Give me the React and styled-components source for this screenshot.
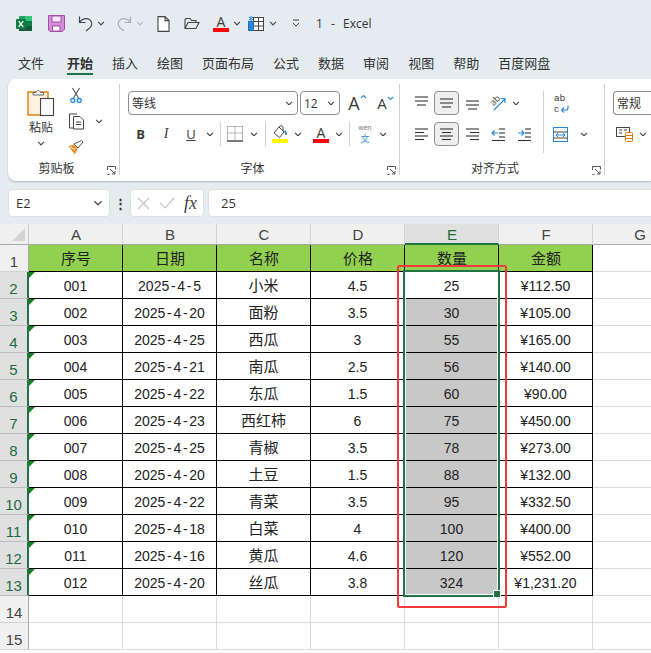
import React from 'react'
import styled, { createGlobalStyle } from 'styled-components'

const UI_FONT = '"Open Sans", "Noto Sans CJK SC", sans-serif'
const CELL_FONT = '"Liberation Sans", "Noto Sans CJK SC", sans-serif'
const GREEN = '#217346'

const GlobalStyle = createGlobalStyle`
    html, body {
        margin: 0;
        width: 651px;
        height: 653px;
        overflow: hidden;
        background: #e5ecf0;
    }
    * { box-sizing: border-box; }
`

const Page = styled.div`
    width: 651px;
    height: 653px;
    overflow: hidden;
    background: #e5ecf0;
    font-family: ${UI_FONT};
    color: #333;
`

const TitleBar = styled.div`
    height: 47px;
    display: flex;
    align-items: center;
    padding-left: 16px;
`

const Slot = styled.div`
    flex: none;
    width: ${p => p.$w}px;
    height: ${p => p.$h || 24}px;
    margin-left: ${p => p.$ml || 0}px;
    display: flex;
    align-items: center;
    justify-content: center;
    position: relative;
    ${p => p.$active && `
        background: #efefef;
        border: 1px solid #8f8f8f;
        border-radius: 4px;
    `}
`

const TitleText = styled.div`
    font-size: 12px;
    margin-left: 15px;
    word-spacing: 5px;
    color: #333;
`

const Tabs = styled.div`
    height: 32px;
    display: flex;
    gap: 19px;
    padding: 0 0 0 18px;
`

const Tab = styled.div`
    position: relative;
    height: 28px;
    line-height: 32px;
    font-size: 13px;
    font-weight: ${p => (p.$active ? 700 : 400)};
    ${p => p.$active && `
        margin-left: 4px;

        &::after {
            content: '';
            position: absolute;
            left: 0;
            right: 0;
            bottom: 0;
            height: 2px;
            background: ${GREEN};
        }
    `}
`

const Ribbon = styled.div`
    height: 102px;
    margin-left: 8px;
    display: flex;
    background: #fff;
    border-radius: 8px 0 0 8px;
    box-shadow: 0 1px 2px rgba(0, 0, 0, 0.22);
`

const Group = styled.div`
    position: relative;
    flex: none;
    width: ${p => p.$w}px;
    height: 91px;
    margin-top: 5px;
    padding: 7px 0 0 8px;
    border-right: 1px solid ${p => (p.$open ? 'transparent' : '#d0d0d0')};
`

const GroupBody = styled.div`
    height: 68px;
    display: flex;
`

const GroupLabel = styled.div`
    text-align: center;
    font-size: 12px;
    line-height: 16px;
    margin: 2px 14px 0 -8px;
`

const Launcher = styled.svg`
    position: absolute;
    right: 3px;
    bottom: 0;
    width: 9px;
    height: 9px;
`

const Stack = styled.div`
    display: flex;
    flex-direction: column;
    gap: 7px;
`

const Row = styled.div`
    display: flex;
    align-items: center;
    height: 24px;
`

const PasteCol = styled.div`
    width: 50px;
    margin-top: -4px;
    display: flex;
    flex-direction: column;
    align-items: center;
    font-size: 12px;
    line-height: 16px;
`

const PasteLabel = styled.span`
    margin: 3px 0 5px;
`

const SmallCol = styled.div`
    display: flex;
    flex-direction: column;
    gap: 2px;
    margin-top: -8px;
`

const Select = styled.div`
    flex: none;
    width: ${p => p.$w}px;
    height: 24px;
    margin-left: ${p => p.$ml || 0}px;
    padding: 0 4px 0 3px;
    display: flex;
    align-items: center;
    justify-content: space-between;
    border: 1px solid #8e8e8e;
    border-radius: 4px;
    font-size: 12px;
    ${p => p.$open && 'border-right: 0; border-radius: 4px 0 0 4px;'}
`

const Sep = styled.div`
    flex: none;
    width: 1px;
    height: ${p => p.$h || 24}px;
    margin: 0 ${p => p.$m ?? 3}px;
    background: #d0d0d0;
`

const FontBtn = styled.span`
    position: relative;
    font-family: ${p => (p.$serif ? '"Liberation Serif", serif' : '"Open Sans", sans-serif')};
    font-size: ${p => p.$size || 13}px;
    font-weight: ${p => p.$weight || 400};
    font-style: ${p => (p.$italic ? 'italic' : 'normal')};
    text-decoration: ${p => (p.$underline ? 'underline' : 'none')};
    line-height: 1;
    color: #3b3b3b;
`

const Caret = styled.svg`
    position: absolute;
    top: 0;
    left: 100%;
    width: 7px;
    height: 5px;
`

const ColorLetter = styled.div`
    width: 16px;
    display: flex;
    flex-direction: column;
    align-items: center;
    font-size: 14px;
    line-height: 13px;
    color: #3b3b3b;

    &::after {
        content: '';
        width: 16px;
        height: 4px;
        background: ${p => p.$bar};
    }
`

const PhoneticBox = styled.div`
    display: flex;
    flex-direction: column;
    align-items: center;
    font-family: "Liberation Sans", sans-serif;
    font-size: 7px;
    line-height: 8px;
    color: #777;

    b {
        font-family: "Noto Sans CJK SC", sans-serif;
        font-weight: 400;
        font-size: 9px;
        line-height: 13px;
        color: #2f8fd8;
    }
`

const WrapText = styled.div`
    width: 16px;
    font-family: "Liberation Sans", sans-serif;
    font-size: 9.5px;
    line-height: 11px;
    color: #3b3b3b;
    letter-spacing: 0.5px;
`

const WrapLine = styled.div`
    display: flex;
    align-items: center;
    gap: 1px;
`

const FormulaBar = styled.div`
    height: 28px;
    margin: 8px 0 7px 8px;
    display: flex;
    align-items: center;
`

const Box = styled.div`
    flex: none;
    width: ${p => p.$w}px;
    height: 28px;
    padding: 0 ${p => p.$pr || 0}px 0 ${p => p.$pl || 0}px;
    margin-left: ${p => p.$ml || 0}px;
    display: flex;
    align-items: center;
    justify-content: ${p => p.$justify || 'flex-start'};
    gap: ${p => p.$gap || 0}px;
    background: #fff;
    border: 1px solid #e0e0e0;
    border-radius: 4px;
    font-size: 13px;
    color: #333;
`

const Dots = styled.div`
    flex: none;
    width: 20px;
    text-align: center;
    font-size: 13px;
    font-weight: 700;
    line-height: 1;
`

const Fx = styled.span`
    font-family: "Liberation Serif", serif;
    font-style: italic;
    font-size: 18px;
    line-height: 1;
    color: #444;
`

const Sheet = styled.div`
    position: relative;
    height: 429px;
    background: #fff;
    overflow: hidden;
`

const Grid = styled.div`
    display: grid;
    grid-template-columns: 29px repeat(7, 94px);
    grid-template-rows: 21px repeat(15, 27px);
    font-family: ${CELL_FONT};
`

const Corner = styled.div`
    position: relative;
    background: #f0f0f0;
    border-right: 1px solid #c9c9c9;
    border-bottom: 1px solid #a9a9a9;

    &::after {
        content: '';
        position: absolute;
        right: 3px;
        bottom: 3px;
        border-style: solid;
        border-width: 0 0 13px 13px;
        border-color: transparent transparent #d4d4d4 transparent;
    }
`

const ColHead = styled.div`
    display: flex;
    align-items: center;
    justify-content: center;
    padding: 1px 0 0 1px;
    font-size: 15px;
    background: ${p => (p.$selected ? '#e0e0e0' : '#f0f0f0')};
    color: ${p => (p.$selected ? '#1d6b41' : '#444')};
    border-right: 1px solid #d2d2d2;
    border-bottom: ${p => (p.$selected ? `2px solid ${GREEN}` : '1px solid #a9a9a9')};
`

const RowHead = styled.div`
    display: flex;
    align-items: flex-end;
    justify-content: center;
    font-size: 15px;
    line-height: 19px;
    background: ${p => (p.$selected ? '#e0e0e0' : '#f0f0f0')};
    color: ${p => (p.$selected ? '#1d6b41' : '#444')};
    border-bottom: 1px solid ${p => (p.$selected ? '#bdbdbd' : '#d2d2d2')};
    border-right: ${p => (p.$selected ? `2px solid ${GREEN}` : '1px solid #a9a9a9')};
`

const Cell = styled.div`
    position: relative;
    display: flex;
    align-items: center;
    justify-content: center;
    font-size: 14px;
    padding-top: 1px;
    color: #222;
    background: ${p => p.$bg || '#fff'};
    border-right: 1px solid ${p => (p.$table ? '#000' : '#dcdcdc')};
    border-bottom: 1px solid ${p => (p.$table ? '#000' : '#dcdcdc')};
    ${p => p.$head && 'font-size: 15px; padding: 0 0 1px 1px;'}
    ${p => p.$cjk && 'font-size: 15px; padding: 0 0 1px;'}
    ${p => p.$flag && `
        &::before {
            content: '';
            position: absolute;
            left: 0;
            top: 0;
            border-style: solid;
            border-width: 6px 6px 0 0;
            border-color: #15801f transparent transparent transparent;
        }
    `}
`

const Dash = styled.span`
    margin: 0 1.7px;
`

const Selection = styled.div`
    position: absolute;
    left: 403px;
    top: 46px;
    width: 97px;
    height: 327px;
    border: 2px solid ${GREEN};
    box-shadow: inset 0 0 0 1px #fff;
    pointer-events: none;
`

const Handle = styled.div`
    position: absolute;
    right: -3px;
    bottom: -3px;
    width: 6px;
    height: 6px;
    background: ${GREEN};
    border: 1px solid #fff;
    box-sizing: content-box;
`

const Highlight = styled.div`
    position: absolute;
    left: 397px;
    top: 41px;
    width: 110px;
    height: 343px;
    border: 2px solid #f43b3b;
    border-radius: 2px;
    pointer-events: none;
`

const Chevron = ({ color = '#444', size = 8 }) => (
    <svg width={size} height={size * 0.6} viewBox="0 0 8 5" fill="none" stroke={color} strokeWidth="1.2">
        <path d="M1 1l3 3 3-3" />
    </svg>
)

const ExcelLogo = () => (
    <svg width="16" height="17" viewBox="0 0 16 17">
        <rect x="3" y="1" width="13" height="15" rx="1" fill="#21a366" />
        <rect x="9" y="1" width="7" height="5" fill="#33c481" />
        <rect x="3" y="11" width="13" height="5" fill="#185c37" />
        <rect x="9" y="6" width="7" height="5" fill="#107c41" />
        <rect x="0" y="4" width="10" height="10" rx="1" fill="#107c41" />
        <path d="M2.6 6.2l4.6 5.6M7.2 6.2l-4.6 5.6" stroke="#fff" strokeWidth="1.3" />
    </svg>
)

const SaveIcon = () => (
    <svg width="17" height="17" viewBox="0 0 17 17">
        <path d="M.5.5h16v14l-2 2H2l-1.5-1.5z" fill="#d28fd8" stroke="#a34cab" />
        <rect x="4" y="1" width="9" height="6" fill="#f6e9f7" stroke="#a34cab" />
        <rect x="4.5" y="11" width="7.5" height="5" fill="#fff" stroke="#a34cab" />
    </svg>
)

const UndoIcon = ({ color = '#444' }) => (
    <svg width="16" height="17" viewBox="0 0 16 17" fill="none" stroke={color} strokeWidth="1.2">
        <path d="M1.5 1.5v6h6M1.8 7.2C4 3.6 8.5 2.8 11.5 4.6c3 2 2.8 5.6.5 8L8 16" />
    </svg>
)

const RedoIcon = () => (
    <svg width="16" height="17" viewBox="0 0 16 17" fill="none" stroke="#a9adb0" strokeWidth="1.2">
        <path d="M14.5 1.5v6h-6M14.2 7.2C12 3.6 7.5 2.8 4.5 4.6c-3 2-2.8 5.6-.5 8L8 16" />
    </svg>
)

const NewIcon = () => (
    <svg width="13" height="16" viewBox="0 0 13 16" fill="#fff" stroke="#444" strokeWidth="1.1">
        <path d="M1 .6h7l4 4v10.8H1zM8 .6v4h4" />
    </svg>
)

const OpenIcon = () => (
    <svg width="16" height="13" viewBox="0 0 16 13" fill="none" stroke="#444" strokeWidth="1.1">
        <path d="M1 11.5V2.5l1-1h4l1.5 2H12v2M1 11.5h11l3-6H4z" />
    </svg>
)

const FreezeIcon = () => (
    <svg width="16" height="15" viewBox="0 0 16 15">
        <rect x="5.5" y="1.5" width="10" height="13" fill="#fff" stroke="#444" />
        <path d="M5.5 5.5h10M5.5 10h10M10.5 1.5v13" stroke="#444" />
        <rect x="0.5" y="5.5" width="5" height="9" fill="#2b88d8" stroke="#1c6fb8" />
        <path d="M3 0v5M.8 1l4.4 3M5.2 1L.8 4" stroke="#2b88d8" />
    </svg>
)

const MoreIcon = () => (
    <svg width="10" height="9" viewBox="0 0 10 9" fill="none" stroke="#444">
        <path d="M2 1h6M2 4l3 3 3-3" />
    </svg>
)

const PasteIcon = () => (
    <svg width="28" height="30" viewBox="0 0 28 30">
        <rect x="1" y="5" width="20" height="23" fill="#fff3e0" stroke="#e07b00" strokeWidth="1.4" />
        <path d="M6 8V5.5h3C9.5 3 13 3 13.500 5.500h3V8z" fill="#fff" stroke="#666" />
        <rect x="13.500" y="11.500" width="13" height="17" fill="#fafafa" stroke="#444" strokeWidth="1.1" />
    </svg>
)

const ScissorsIcon = () => (
    <svg width="12" height="17" viewBox="0 0 12 17" fill="none">
        <path d="M2.500 1l6 10M9.500 1l-6 10" stroke="#555" strokeWidth="1.1" />
        <circle cx="2.800" cy="13.500" r="2" stroke="#2b88d8" strokeWidth="1.300" />
        <circle cx="9.200" cy="13.500" r="2" stroke="#2b88d8" strokeWidth="1.300" />
    </svg>
)

const CopyIcon = () => (
    <svg width="17" height="17" viewBox="0 0 17 17" fill="#fff" stroke="#444" strokeWidth="1">
        <path d="M5 15H1.500V1H9" fill="none" />
        <path d="M5.500 3.500h6.500l3.500 3.500v9H5.500z" />
        <path d="M8 9h5M8 11.500h5" />
    </svg>
)

const BrushIcon = () => (
    <svg width="16" height="15" viewBox="0 0 16 15">
        <path d="M0.500 6.500l5-2 4 4-2.500 6z" fill="#f08a24" />
        <path d="M2 7l5 2.500" stroke="#fff" />
        <path d="M6 4l4 4 5-6-1.500-1.500z" fill="#fff" stroke="#555" />
    </svg>
)

const LauncherIcon = () => (
    <Launcher viewBox="0 0 9 9" fill="none" stroke="#555">
        <path d="M.5 4V.5h8M.5 8.500h2M8.500.5v3M3 3l5 5M8 5v3H5" />
    </Launcher>
)

const BorderIcon = () => (
    <svg width="16" height="16" viewBox="0 0 16 16" fill="none" stroke="#777" strokeDasharray="1 1">
        <path d="M.5 .5h15M.5 .5v13M15.500 .5v13M.5 7h15M8 .5v13" />
        <path d="M0 15h16" stroke="#222" strokeWidth="1.200" strokeDasharray="none" />
    </svg>
)

const FillIcon = () => (
    <svg width="16" height="18" viewBox="0 0 16 18">
        <path d="M2 8l5-6 5 5-4.500 5.500z" fill="#fff" stroke="#444" />
        <path d="M7 2l2-1.500 2 1.500v4" fill="none" stroke="#444" />
        <path d="M12.500 6c1 .5 1.800 2 1.500 4" fill="none" stroke="#1c6fb8" strokeWidth="1.400" />
        <rect y="14" width="16" height="4" fill="#ffff00" />
    </svg>
)

const LinesIcon = ({ rows, accent }) => (
    <svg width="15" height="16" viewBox="0 0 15 16" fill="none" stroke="#333" strokeWidth="1.100">
        {rows.map(([x1, x2, y]) => (
            <path key={y} d={`M${x1} ${y}H${x2}`} />
        ))}
        {accent && <path d={accent} stroke="#2b88d8" strokeWidth="1.200" />}
    </svg>
)

const AngleIcon = () => (
    <svg width="17" height="17" viewBox="0 0 17 17" fill="none" overflow="visible">
        <text x="1" y="9" fontSize="9" fill="#444" fontFamily="Open Sans" transform="rotate(-45 5 7)">ab</text>
        <path d="M4 15L15 4M10.500 3.500H15V8" stroke="#2b88d8" strokeWidth="1.200" />
    </svg>
)

const WrapArrow = () => (
    <svg width="9" height="8" viewBox="0 0 9 8" fill="none" stroke="#2b88d8" strokeWidth="1.100">
        <path d="M8 .5V3a2 2 0 0 1-2 2H1.500M4 2.500L1.500 5 4 7.500" />
    </svg>
)

const MergeIcon = () => (
    <svg width="15" height="15" viewBox="0 0 15 15" fill="#fff">
        <rect x=".5" y=".5" width="14" height="14" stroke="#2b88d8" />
        <path d="M.5 5h14M.5 11h14" stroke="#444" />
        <path d="M3 8h9M5 6L3 8l2 2M10 6l2 2-2 2" fill="none" stroke="#2b88d8" />
    </svg>
)

const CondIcon = () => (
    <svg width="18" height="15" viewBox="0 0 18 15">
        <rect x=".5" y=".5" width="13" height="9" fill="#fff" stroke="#444" />
        <path d="M3 3h3M3 6h3M8 3h3" stroke="#444" />
        <rect x="9.500" y="5.500" width="7" height="9" rx="1" fill="#fff" stroke="#e07b00" />
        <path d="M10 8.500h6M10 11.500h6" stroke="#e07b00" />
    </svg>
)

const CrossIcon = () => (
    <svg width="13" height="13" viewBox="0 0 13 13" stroke="#c4c4c4" strokeWidth="1.200">
        <path d="M1 1l11 11M12 1L1 12" />
    </svg>
)

const CheckIcon = () => (
    <svg width="16" height="12" viewBox="0 0 16 12" fill="none" stroke="#c4c4c4" strokeWidth="1.200">
        <path d="M1 6l5 5L15 1" />
    </svg>
)

const GrowCaret = ({ down }) => (
    <Caret viewBox="0 0 7 5" fill="none" stroke="#2f8fd8" strokeWidth="1.200">
        <path d={down ? 'M1 1l2.500 2.500L6 1' : 'M1 4l2.500-2.500L6 4'} />
    </Caret>
)

const TABS = ['文件', '开始', '插入', '绘图', '页面布局', '公式', '数据', '审阅', '视图', '帮助', '百度网盘']
const COLS = ['A', 'B', 'C', 'D', 'E', 'F', 'G']
const HEADERS = ['序号', '日期', '名称', '价格', '数量', '金额']
const ROWS = [
    ['001', '2025-4-5', '小米', '4.5', '25', '¥112.50'],
    ['002', '2025-4-20', '面粉', '3.5', '30', '¥105.00'],
    ['003', '2025-4-25', '西瓜', '3', '55', '¥165.00'],
    ['004', '2025-4-21', '南瓜', '2.5', '56', '¥140.00'],
    ['005', '2025-4-22', '东瓜', '1.5', '60', '¥90.00'],
    ['006', '2025-4-23', '西红柿', '6', '75', '¥450.00'],
    ['007', '2025-4-25', '青椒', '3.5', '78', '¥273.00'],
    ['008', '2025-4-20', '土豆', '1.5', '88', '¥132.00'],
    ['009', '2025-4-22', '青菜', '3.5', '95', '¥332.50'],
    ['010', '2025-4-18', '白菜', '4', '100', '¥400.00'],
    ['011', '2025-4-16', '黄瓜', '4.6', '120', '¥552.00'],
    ['012', '2025-4-20', '丝瓜', '3.8', '324', '¥1,231.20'],
]

const DateText = ({ value }) => {
    const [y, m, d] = value.split('-')
    return (
        <span>
            {y}<Dash>-</Dash>{m}<Dash>-</Dash>{d}
        </span>
    )
}

const Clipboard = () => (
    <Group $w={112}>
        <GroupBody>
            <PasteCol>
                <PasteIcon />
                <PasteLabel>粘贴</PasteLabel>
                <Chevron />
            </PasteCol>
            <SmallCol>
                <Slot $w={20}><ScissorsIcon /></Slot>
                <Row>
                    <Slot $w={20}><CopyIcon /></Slot>
                    <Slot $w={14} $ml={6}><Chevron /></Slot>
                </Row>
                <Slot $w={20}><BrushIcon /></Slot>
            </SmallCol>
        </GroupBody>
        <GroupLabel>剪贴板</GroupLabel>
        <LauncherIcon />
    </Group>
)

const FontGroup = () => (
    <Group $w={280}>
        <GroupBody>
            <Stack>
                <Row>
                    <Select $w={170}>等线<Chevron /></Select>
                    <Select $w={40} $ml={2}>12<Chevron /></Select>
                    <Slot $w={22} $ml={3}><FontBtn $size={18}>A<GrowCaret /></FontBtn></Slot>
                    <Slot $w={22} $ml={6}><FontBtn $size={15}>A<GrowCaret down /></FontBtn></Slot>
                </Row>
                <Row>
                    <Slot $w={25}><FontBtn $weight={700} $size={13}>B</FontBtn></Slot>
                    <Slot $w={26}><FontBtn $serif $italic $size={14}>I</FontBtn></Slot>
                    <Slot $w={24}><FontBtn $underline $size={13}>U</FontBtn></Slot>
                    <Slot $w={14}><Chevron /></Slot>
                    <Sep />
                    <Slot $w={22}><BorderIcon /></Slot>
                    <Slot $w={16}><Chevron /></Slot>
                    <Sep />
                    <Slot $w={22}><FillIcon /></Slot>
                    <Slot $w={14}><Chevron /></Slot>
                    <Slot $w={22} $ml={5}><ColorLetter $bar="#ff0000">A</ColorLetter></Slot>
                    <Slot $w={14}><Chevron /></Slot>
                    <Sep />
                    <Slot $w={24}><PhoneticBox>wén<b>文</b></PhoneticBox></Slot>
                    <Slot $w={12}><Chevron /></Slot>
                </Row>
            </Stack>
        </GroupBody>
        <GroupLabel>字体</GroupLabel>
        <LauncherIcon />
    </Group>
)

const AlignGroup = () => (
    <Group $w={205}>
        <GroupBody>
            <Stack>
                <Row>
                    <Slot $w={26}><LinesIcon rows={[[1, 14, 2], [1, 14, 6], [3, 12, 10]]} /></Slot>
                    <Slot $w={25} $active><LinesIcon rows={[[1, 14, 4], [1, 14, 8], [3, 12, 12]]} /></Slot>
                    <Slot $w={26}><LinesIcon rows={[[1, 14, 6], [1, 14, 10], [3, 12, 14]]} /></Slot>
                    <Slot $w={26}><AngleIcon /></Slot>
                    <Slot $w={10}><Chevron /></Slot>
                </Row>
                <Row>
                    <Slot $w={26}><LinesIcon rows={[[1, 14, 3], [1, 10, 6.5], [1, 14, 10], [1, 10, 13.5]]} /></Slot>
                    <Slot $w={25} $active><LinesIcon rows={[[1, 14, 3], [3, 12, 6.5], [1, 14, 10], [3, 12, 13.5]]} /></Slot>
                    <Slot $w={26}><LinesIcon rows={[[1, 14, 3], [5, 14, 6.5], [1, 14, 10], [5, 14, 13.5]]} /></Slot>
                    <Slot $w={26}><LinesIcon rows={[[8, 14, 3], [8, 14, 7], [8, 14, 11], [1, 14, 14.5]]} accent="M1 7h6M3.500 4.500L1 7l2.500 2.500" /></Slot>
                    <Slot $w={26}><LinesIcon rows={[[8, 14, 3], [8, 14, 7], [8, 14, 11], [1, 14, 14.5]]} accent="M1 7h6M4.500 4.500L7 7l-2.500 2.500" /></Slot>
                </Row>
            </Stack>
            <Sep $h={62} $m={6} />
            <Stack>
                <Row>
                    <Slot $w={24}>
                        <WrapText>
                            <WrapLine>ab</WrapLine>
                            <WrapLine>c<WrapArrow /></WrapLine>
                        </WrapText>
                    </Slot>
                </Row>
                <Row>
                    <Slot $w={20}><MergeIcon /></Slot>
                    <Slot $w={22} $ml={3}><Chevron /></Slot>
                </Row>
            </Stack>
        </GroupBody>
        <GroupLabel>对齐方式</GroupLabel>
        <LauncherIcon />
    </Group>
)

const NumberGroup = () => (
    <Group $w={46} $open>
        <GroupBody>
            <Stack>
                <Select $w={38} $open>常规</Select>
                <Row>
                    <Slot $w={24}><CondIcon /></Slot>
                    <Slot $w={12}><Chevron /></Slot>
                </Row>
            </Stack>
        </GroupBody>
    </Group>
)

function App() {
    return (
        <Page>
            <GlobalStyle />
            <TitleBar>
                <ExcelLogo />
                <Slot $w={17} $ml={16}><SaveIcon /></Slot>
                <Slot $w={16} $ml={13}><UndoIcon /></Slot>
                <Slot $w={12} $ml={1}><Chevron /></Slot>
                <Slot $w={16} $ml={9}><RedoIcon /></Slot>
                <Slot $w={12} $ml={2}><Chevron color="#b5b9bc" /></Slot>
                <Slot $w={13} $ml={11}><NewIcon /></Slot>
                <Slot $w={16} $ml={14}><OpenIcon /></Slot>
                <Slot $w={16} $ml={13}><ColorLetter $bar="#ff0000">A</ColorLetter></Slot>
                <Slot $w={12} $ml={2}><Chevron /></Slot>
                <Slot $w={16} $ml={5}><FreezeIcon /></Slot>
                <Slot $w={12} $ml={3}><Chevron /></Slot>
                <Slot $w={10} $ml={12}><MoreIcon /></Slot>
                <TitleText>1 - Excel</TitleText>
            </TitleBar>
            <Tabs>
                {TABS.map(tab => (
                    <Tab key={tab} $active={tab === '开始'}>{tab}</Tab>
                ))}
            </Tabs>
            <Ribbon>
                <Clipboard />
                <FontGroup />
                <AlignGroup />
                <NumberGroup />
            </Ribbon>
            <FormulaBar>
                <Box $w={102} $pl={7} $pr={6} $justify="space-between">E2<Chevron color="#555" size={10} /></Box>
                <Dots>⋮</Dots>
                <Box $w={74} $pl={6} $pr={3} $gap={9}>
                    <CrossIcon />
                    <CheckIcon />
                    <Fx>fx</Fx>
                </Box>
                <Box $w={460} $ml={4} $pl={12}>25</Box>
            </FormulaBar>
            <Sheet>
                <Grid>
                    <Corner />
                    {COLS.map(col => (
                        <ColHead key={col} $selected={col === 'E'}>{col}</ColHead>
                    ))}
                    <RowHead>1</RowHead>
                    {HEADERS.map(text => (
                        <Cell key={text} $table $head $bg="#92d050">{text}</Cell>
                    ))}
                    <Cell />
                    {ROWS.map((row, r) => (
                        <React.Fragment key={row[0]}>
                            <RowHead $selected>{r + 2}</RowHead>
                            {row.map((value, c) => (
                                <Cell
                                    key={c}
                                    $table
                                    $flag={c === 0}
                                    $cjk={c === 2}
                                    $bg={c === 4 && r > 0 ? '#c8c8c8' : '#fff'}
                                >
                                    {c === 1 ? <DateText value={value} /> : value}
                                </Cell>
                            ))}
                            <Cell />
                        </React.Fragment>
                    ))}
                    {[14, 15].map(n => (
                        <React.Fragment key={n}>
                            <RowHead>{n}</RowHead>
                            {COLS.map(col => (
                                <Cell key={col} />
                            ))}
                        </React.Fragment>
                    ))}
                </Grid>
                <Selection><Handle /></Selection>
                <Highlight />
            </Sheet>
        </Page>
    )
}

export default App
